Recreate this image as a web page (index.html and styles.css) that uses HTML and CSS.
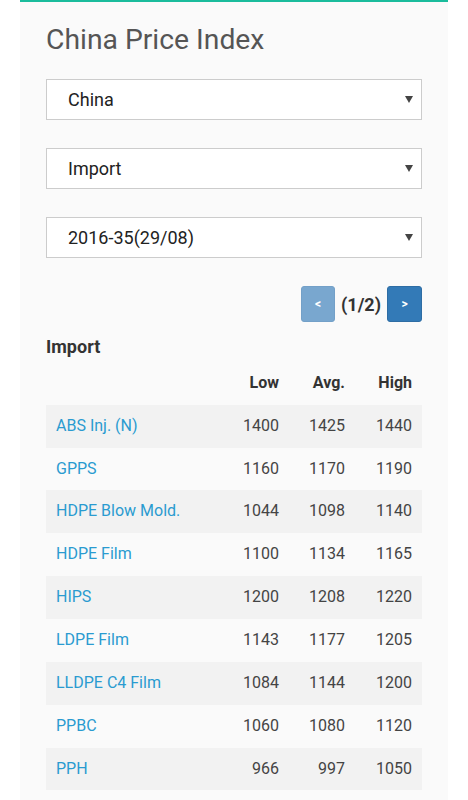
FILE: index.html
```html
<!DOCTYPE html>
<html>
<head>
<meta charset="utf-8">
<link rel="stylesheet" href="styles.css">
</head>
<body>
<div class="panel">
  <h1 class="title">China Price Index</h1>
  <div class="select"><span>China</span><svg class="caret" width="8" height="7" viewBox="0 0 8 7"><path d="M0 0H8L4 7Z" fill="#444"/></svg></div>
  <div class="select"><span>Import</span><svg class="caret" width="8" height="7" viewBox="0 0 8 7"><path d="M0 0H8L4 7Z" fill="#444"/></svg></div>
  <div class="select"><span>2016-35(29/08)</span><svg class="caret" width="8" height="7" viewBox="0 0 8 7"><path d="M0 0H8L4 7Z" fill="#444"/></svg></div>
  <div class="pager">
    <span class="btn btn-disabled">&lt;</span>
    <span class="pages">(1/2)</span>
    <span class="btn">&gt;</span>
  </div>
  <h4 class="section">Import</h4>
  <table class="prices">
    <colgroup><col><col class="c-low"><col class="c-avg"><col class="c-high"></colgroup>
    <thead>
      <tr><th></th><th>Low</th><th>Avg.</th><th>High</th></tr>
    </thead>
    <tbody>
      <tr><td><a href="#">ABS Inj. (N)</a></td><td>1400</td><td>1425</td><td>1440</td></tr>
      <tr><td><a href="#">GPPS</a></td><td>1160</td><td>1170</td><td>1190</td></tr>
      <tr><td><a href="#">HDPE Blow Mold.</a></td><td>1044</td><td>1098</td><td>1140</td></tr>
      <tr><td><a href="#">HDPE Film</a></td><td>1100</td><td>1134</td><td>1165</td></tr>
      <tr><td><a href="#">HIPS</a></td><td>1200</td><td>1208</td><td>1220</td></tr>
      <tr><td><a href="#">LDPE Film</a></td><td>1143</td><td>1177</td><td>1205</td></tr>
      <tr><td><a href="#">LLDPE C4 Film</a></td><td>1084</td><td>1144</td><td>1200</td></tr>
      <tr><td><a href="#">PPBC</a></td><td>1060</td><td>1080</td><td>1120</td></tr>
      <tr><td><a href="#">PPH</a></td><td>966</td><td>997</td><td>1050</td></tr>
    </tbody>
  </table>
</div>
</body>
</html>
```
FILE: styles.css
```css
html, body {
  margin: 0;
  padding: 0;
  background: #ffffff;
}
body {
  font-family: Roboto, "Liberation Sans", Arial, sans-serif;
  color: #333333;
  font-size: 16px;
}
.panel {
  margin: 0 20px;
  background: #fafafa;
  border-top: 2px solid #1abc9c;
  padding: 0 26px 40px 26px;
}
.title {
  margin: 22px 0 0 0;
  font-size: 28.3px;
  line-height: 1.1;
  font-weight: 400;
  color: #555555;
}
.select {
  margin-top: 24px;
  height: 41px;
  box-sizing: border-box;
  border: 1px solid #cccccc;
  background: #ffffff;
  display: flex;
  align-items: center;
  justify-content: space-between;
  padding: 0 8px 0 21px;
  font-size: 18px;
  color: #222222;
}
.select + .select {
  margin-top: 28px;
}
.caret {
  display: block;
}
.pager {
  margin-top: 28px;
  display: flex;
  justify-content: flex-end;
  align-items: center;
  gap: 6px;
}
.btn {
  width: 35px;
  height: 36px;
  box-sizing: border-box;
  border-radius: 3px;
  background: #337ab7;
  border: 1px solid #2e6da4;
  color: #ffffff;
  font-size: 12px;
  font-weight: 700;
  display: flex;
  align-items: center;
  justify-content: center;
}
.btn-disabled {
  background: #79a7cf;
  border-color: #73a0c8;
  width: 34px;
}
.pages {
  font-size: 18px;
  font-weight: 700;
  color: #333333;
}
.section {
  margin: 15px 0 5px 0;
  font-size: 18px;
  line-height: 1.1;
  font-weight: 700;
  color: #333333;
}
.prices {
  width: 100%;
  border-collapse: collapse;
  font-size: 16px;
  line-height: 1.42857;
}
.c-low { width: 80px; }
.c-avg { width: 66px; }
.c-high { width: 67px; }
.prices th,
.prices td {
  padding: 10px;
  text-align: right;
}
.prices th {
  font-weight: 700;
  color: #333333;
}
.prices td {
  color: #444444;
}
.prices td:first-child {
  text-align: left;
}
.prices tbody tr:nth-child(odd) {
  background: #f2f2f2;
}
.prices a {
  color: #2a9bd0;
  text-decoration: none;
}
```
